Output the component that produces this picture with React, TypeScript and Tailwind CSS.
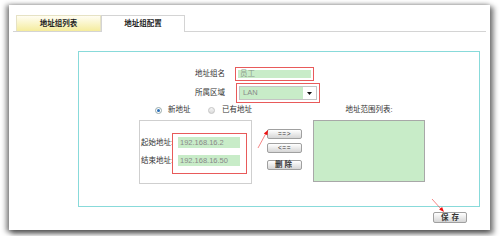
export default function App() {
  return (
    <div className="relative w-[500px] h-[236px] bg-white overflow-hidden pl-[9px] pt-[5px] text-[7.5px] leading-none text-[#333] font-['Liberation_Sans','Noto_Sans_CJK_SC',sans-serif]">
      <div className="w-[481px] h-[225px] bg-white shadow-[-2px_1px_5px_1px_rgba(0,0,0,0.45),3px_3px_5px_1px_rgba(0,0,0,0.45)] flex flex-col">
        {/* tabs */}
        <div className="mt-[10px] mx-[4px] border-b border-[#d4d4d4] flex items-end pl-[3px]">
          <div className="w-[85px] h-[16px] flex items-center justify-center font-bold text-[#222] border border-b-0 border-[#e6e2c4] bg-gradient-to-b from-[#fffdf2] to-[#f5ec9c]">
            地址组列表
          </div>
          <div className="w-[84px] h-[17px] -mb-px bg-white border border-b-0 border-[#d4d4d4] flex items-center justify-center font-bold text-[#222]">
            地址组配置
          </div>
        </div>

        {/* cyan box */}
        <div className="ml-[69px] mt-[19px] w-[402px] h-[156px] border border-[#88dada] flex flex-col">
          {/* row 1 */}
          <div className="mt-[15px] pl-[116px] flex items-center">
            <div className="w-[32px]">地址组名</div>
            <div className="ml-[8px] w-[79px] h-[14px] border border-[#e85a5a] p-[2px]">
              <div className="w-full h-full bg-[#c8ecc8] flex items-center pl-[2px] text-[#8a9a8a]">员工</div>
            </div>
          </div>
          {/* row 2 */}
          <div className="mt-[2px] pl-[116px] flex items-center">
            <div className="w-[32px]">所属区域</div>
            <div className="ml-[9px] w-[84px] h-[20px] border border-[#e85a5a] p-[2px]">
              <div className="w-full h-full border border-[#c4c4c4] bg-white flex">
                <div className="flex-1 bg-[#c8ecc8] flex items-center pl-[3px] text-[#888]">LAN</div>
                <div className="w-[13px] flex items-center justify-center">
                  <svg width="5" height="3" viewBox="0 0 5 3">
                    <polygon points="0,0 5,0 2.5,3" fill="#111" />
                  </svg>
                </div>
              </div>
            </div>
          </div>
          {/* main */}
          <div className="mt-[2px] pl-[60px] flex">
            {/* left column */}
            <div className="w-[113px] flex flex-col">
              <div className="h-[10px] pl-[16px] flex items-center">
                <div className="w-[53px] flex items-center">
                  <div className="w-[7px] h-[7px] rounded-full border border-[#9aa] bg-white flex items-center justify-center">
                    <div className="w-[3px] h-[3px] rounded-full bg-[#2a6fb8]" />
                  </div>
                  <span className="ml-[6px]">新地址</span>
                </div>
                <div className="w-[7px] h-[7px] rounded-full border border-[#c4c4c4] bg-gradient-to-b from-[#f4f4f4] to-[#dcdcdc]" />
                <span className="ml-[7px]">已有地址</span>
              </div>
              <div className="mt-[5px] w-[113px] h-[64px] border border-[#cfcfcf] relative pt-[16px]">
                <div className="flex items-center h-[11px]">
                  <div className="w-[38px] pl-[1px] whitespace-nowrap">起始地址:</div>
                  <div className="w-[62px] h-[11px] bg-[#c8ecc8] flex items-center pl-[2px] text-[#888]">192.168.16.2</div>
                </div>
                <div className="mt-[7px] flex items-center h-[11px]">
                  <div className="w-[38px] pl-[1px] whitespace-nowrap">结束地址:</div>
                  <div className="w-[62px] h-[11px] bg-[#c8ecc8] flex items-center pl-[2px] text-[#888]">192.168.16.50</div>
                </div>
                <div className="absolute left-[32px] top-[12px] w-[75px] h-[41px] border border-[#e85a5a]" />
              </div>
            </div>
            {/* buttons */}
            <div className="ml-[15px] mt-[24px] flex flex-col w-[35px]">
              <div className="h-[10px] rounded-[2px] border border-[#a0a0a0] bg-gradient-to-b from-white to-[#d6d6d6] flex items-center justify-center text-[6.5px] tracking-[0.5px]">==&gt;</div>
              <div className="mt-[4px] h-[10px] rounded-[2px] border border-[#a0a0a0] bg-gradient-to-b from-white to-[#d6d6d6] flex items-center justify-center text-[6.5px] tracking-[0.5px]">&lt;==</div>
              <div className="mt-[7px] h-[10px] rounded-[2px] border border-[#a0a0a0] bg-gradient-to-b from-white to-[#d6d6d6] flex items-center justify-center font-bold text-[#333] tracking-[2px]">删除</div>
            </div>
            {/* right column */}
            <div className="ml-[11px] w-[112px] flex flex-col items-center">
              <div className="h-[10px] flex items-center">地址范围列表:</div>
              <div className="mt-[5px] w-[112px] h-[62px] border border-[#a8a8a8] bg-[#c8ecc8]" />
            </div>
          </div>
        </div>

        {/* save */}
        <div className="self-end mr-[23px] mt-[5px] w-[34px] h-[11px] rounded-[2px] border border-[#a0a0a0] bg-gradient-to-b from-white to-[#d6d6d6] flex items-center justify-center font-bold text-[#333] tracking-[3px] pl-[3px]">
          保存
        </div>
      </div>

      {/* annotation arrows */}
      <svg className="absolute inset-0 pointer-events-none" width="500" height="236" viewBox="0 0 500 236">
        <line x1="258" y1="148" x2="265.8" y2="133.6" stroke="#f04040" strokeWidth="0.8" strokeOpacity="0.8" />
        <polygon points="268,130 267.4,135.3 263.8,133.5" fill="#f01010" />
        <line x1="432" y1="199" x2="441" y2="209" stroke="#f04040" strokeWidth="0.8" strokeOpacity="0.8" />
        <polygon points="444,212 439.1,209.6 442.1,206.9" fill="#f01010" />
      </svg>
    </div>
  );
}
